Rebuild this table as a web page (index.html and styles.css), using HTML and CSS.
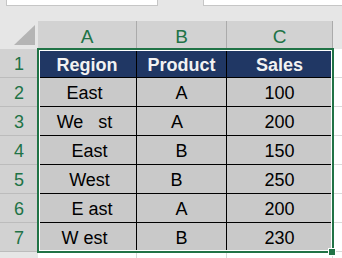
FILE: index.html
```html
<!DOCTYPE html>
<html>
<head>
<meta charset="utf-8">
<link rel="stylesheet" href="styles.css">
</head>
<body>
<div class="topbar">
  <div class="namebox"></div>
  <div class="formula"></div>
</div>
<div class="sheet">
  <div class="corner"><svg width="38" height="28" viewBox="0 0 38 28"><polygon points="35,4 35,24 14,24" fill="#b4b4b4"/></svg></div>
  <div class="colhdr">A</div>
  <div class="colhdr">B</div>
  <div class="colhdr last">C</div>
  <div class="colhdr-rest"></div>

  <div class="rowhdr">1</div>
  <div class="cell th">Region</div>
  <div class="cell th">Product</div>
  <div class="cell th">Sales</div>
  <div class="out"></div>

  <div class="rowhdr">2</div>
  <div class="cell">East </div>
  <div class="cell">A</div>
  <div class="cell">100</div>
  <div class="out"></div>

  <div class="rowhdr">3</div>
  <div class="cell">We   st </div>
  <div class="cell">A  </div>
  <div class="cell">200</div>
  <div class="out"></div>

  <div class="rowhdr">4</div>
  <div class="cell"> East</div>
  <div class="cell">B</div>
  <div class="cell">150</div>
  <div class="out"></div>

  <div class="rowhdr">5</div>
  <div class="cell"> West</div>
  <div class="cell">B  </div>
  <div class="cell">250</div>
  <div class="out"></div>

  <div class="rowhdr">6</div>
  <div class="cell">  E ast</div>
  <div class="cell">A</div>
  <div class="cell">200</div>
  <div class="out"></div>

  <div class="rowhdr">7</div>
  <div class="cell">W est </div>
  <div class="cell">B</div>
  <div class="cell">230</div>
  <div class="out"></div>

  <div class="rowhdr-empty"></div>
  <div class="blank"></div>
  <div class="blank"></div>
  <div class="blank"></div>
  <div class="blank-rest"></div>

  <div class="selection"></div>
  <div class="handle"></div>
</div>
</body>
</html>
```
FILE: styles.css
```css
html, body {
  margin: 0;
  padding: 0;
  width: 342px;
  height: 258px;
  overflow: hidden;
  background: #ffffff;
  font-family: "Liberation Sans", Arial, sans-serif;
}

.topbar {
  height: 21px;
  background: #e6e6e6;
  display: flex;
  align-items: flex-start;
}

.namebox {
  box-sizing: border-box;
  margin-left: 6px;
  width: 152px;
  height: 6px;
  background: #fff;
  border: 1px solid #c6c6c6;
  border-top: none;
}

.formula {
  box-sizing: border-box;
  margin-left: 45px;
  flex: 1;
  height: 6px;
  background: #fff;
  border: 1px solid #c6c6c6;
  border-top: none;
  border-right: none;
}

.sheet {
  position: relative;
  display: grid;
  grid-template-columns: 38px 99px 90px 106px 1fr;
  grid-template-rows: 28px repeat(7, 29px) 1fr;
  height: 237px;
}

.corner {
  background: #e6e6e6;
  height: 28px;
}

.corner svg {
  display: block;
}

.colhdr {
  box-sizing: border-box;
  background: #d2d2d2;
  border-right: 1px solid #ababab;
  color: #217346;
  font-size: 19px;
  text-align: center;
  padding-top: 4px;
  line-height: 24px;
}

.colhdr-rest {
  background: #e6e6e6;
}

.rowhdr {
  box-sizing: border-box;
  background: #d2d2d2;
  border-bottom: 1px solid #bcbcbc;
  color: #217346;
  font-size: 18px;
  text-align: center;
  padding-top: 2px;
  line-height: 27px;
}

.rowhdr-empty {
  background: #e6e6e6;
}

.cell {
  box-sizing: border-box;
  background: #c9c9c9;
  border-right: 1px solid #000;
  border-bottom: 1px solid #000;
  color: #000;
  font-size: 18px;
  text-align: center;
  white-space: pre;
  padding-top: 2px;
  line-height: 27px;
}

.cell.th {
  background: #203764;
  color: #f2f2f2;
  font-weight: bold;
  padding-top: 3px;
  line-height: 26px;
}

.out {
  border-bottom: 1px solid #d9d9d9;
}

.blank {
  border-right: 1px solid #d9d9d9;
}

.blank-rest {
  background: #fff;
}

.selection {
  position: absolute;
  left: 37px;
  top: 27px;
  width: 297px;
  height: 205px;
  box-sizing: border-box;
  border: 2px solid #217346;
  box-shadow: inset 0 0 0 1px #ffffff;
  pointer-events: none;
}

.handle {
  position: absolute;
  left: 328px;
  top: 227px;
  width: 6px;
  height: 6px;
  background: #217346;
  border: 1px solid #ffffff;
}
```
